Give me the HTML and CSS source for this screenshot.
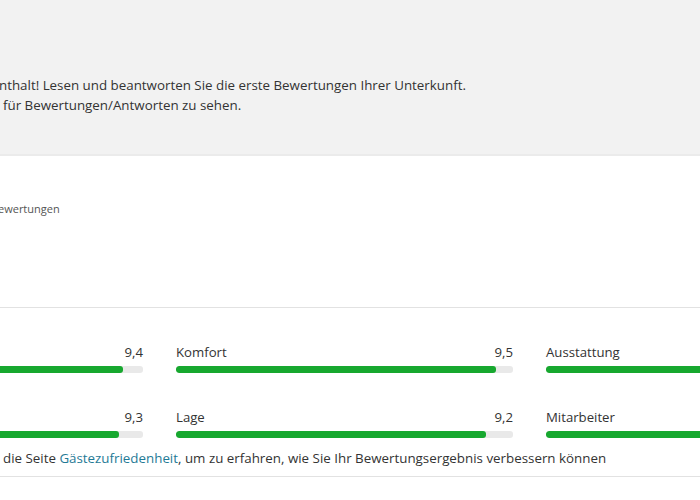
FILE: index.html
```html
<!DOCTYPE html>
<html lang="de">
<head>
<meta charset="utf-8">
<title>Bewertungen</title>
<link rel="stylesheet" href="styles.css">
</head>
<body>
<div class="page">
  <section class="intro">
    <p class="intro-line first">nthalt! Lesen und beantworten Sie die erste Bewertungen Ihrer Unterkunft.</p>
    <p class="intro-line second">für Bewertungen/Antworten zu sehen.</p>
  </section>

  <section class="summary">
    <p class="summary-label">ewertungen</p>
  </section>

  <section class="ratings">
    <div class="grid">
      <div class="item">
        <div class="item-head"><span class="name"></span><span class="value">9,4</span></div>
        <div class="track"><div class="fill" style="width:94%"></div></div>
      </div>
      <div class="item">
        <div class="item-head"><span class="name">Komfort</span><span class="value">9,5</span></div>
        <div class="track"><div class="fill" style="width:95%"></div></div>
      </div>
      <div class="item">
        <div class="item-head"><span class="name">Ausstattung</span><span class="value">9,3</span></div>
        <div class="track"><div class="fill" style="width:93%"></div></div>
      </div>
      <div class="item">
        <div class="item-head"><span class="name"></span><span class="value">9,3</span></div>
        <div class="track"><div class="fill" style="width:93%"></div></div>
      </div>
      <div class="item">
        <div class="item-head"><span class="name">Lage</span><span class="value">9,2</span></div>
        <div class="track"><div class="fill" style="width:92%"></div></div>
      </div>
      <div class="item">
        <div class="item-head"><span class="name">Mitarbeiter</span><span class="value">9,6</span></div>
        <div class="track"><div class="fill" style="width:96%"></div></div>
      </div>
    </div>
    <p class="hint">die Seite <a class="link" href="#">Gästezufriedenheit</a>, um zu erfahren, wie Sie Ihr Bewertungsergebnis verbessern können</p>
  </section>
</div>
</body>
</html>
```

FILE: styles.css
```css
html, body {
  margin: 0;
  padding: 0;
  background: #ffffff;
  overflow: hidden;
}

body {
  font-family: "Open Sans", "Noto Sans", "Liberation Sans", sans-serif;
  color: #333333;
  font-size: 13.35px;
}

.page {
  width: 700px;
}

p {
  margin: 0;
}

.intro {
  background: #f2f2f2;
  height: 156px;
  box-sizing: border-box;
  padding-top: 75px;
  border-bottom: 2px solid #ebebeb;
}

.intro-line {
  line-height: 20px;
  white-space: nowrap;
}

.intro-line.first {
  margin-left: -1px;
}

.intro-line.second {
  margin-left: 3px;
}

.summary {
  height: 152px;
  box-sizing: border-box;
  padding-top: 45px;
  border-bottom: 1px solid #e2e2e2;
}

.summary-label {
  font-size: 11px;
  color: #555555;
  line-height: 16px;
  margin-left: -2px;
}

.ratings {
  padding-top: 34px;
  padding-bottom: 8px;
  border-bottom: 1px solid #e2e2e2;
}

.grid {
  display: grid;
  grid-template-columns: repeat(3, 337px);
  column-gap: 33px;
  row-gap: 34px;
  margin-left: -194px;
}

.item-head {
  display: flex;
  justify-content: space-between;
  line-height: 20px;
  font-size: 13.2px;
  color: #333333;
}

.track {
  margin-top: 4px;
  height: 7px;
  border-radius: 3px;
  background: #e9e9e9;
  overflow: hidden;
}

.fill {
  height: 100%;
  background: #17a82f;
  border-radius: 3px;
}

.hint {
  margin-top: 10px;
  margin-left: 3px;
  line-height: 20px;
  white-space: nowrap;
}

.link {
  color: #1f7a96;
  text-decoration: none;
}
```
